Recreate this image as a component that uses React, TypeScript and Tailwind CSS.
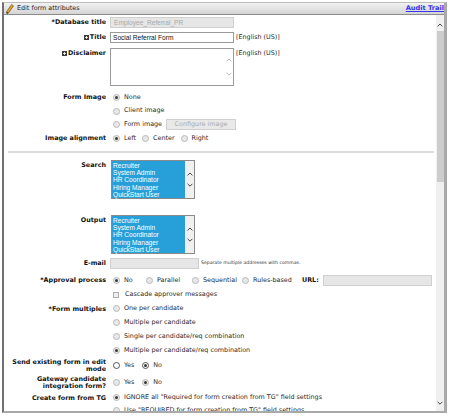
import React from "react";

const roles = ["Recruiter", "System Admin", "HR Coordinator", "Hiring Manager", "QuickStart User"];

function Radio({on, white}: {on?: boolean; white?: boolean}) {
  return (
    <span
      className={
        white
          ? "flex h-[7px] w-[7px] shrink-0 items-center justify-center rounded-full border border-[#555] bg-white"
          : "flex h-[7px] w-[7px] shrink-0 items-center justify-center rounded-full border border-[#b9b9b9] bg-[#e8e8e8]"
      }
    >
      {on && <span className="h-[3px] w-[3px] rounded-full bg-[#3a3a3a]" />}
    </span>
  );
}

function Opt({label, on, white, className = ""}: {label: string; on?: boolean; white?: boolean; className?: string}) {
  return (
    <div className={`flex items-center gap-[4px] ${className}`}>
      <Radio on={on} white={white} />
      <span className="whitespace-nowrap">{label}</span>
    </div>
  );
}

function Chevron({up, color = "#333"}: {up?: boolean; color?: string}) {
  return (
    <svg width="6" height="4" viewBox="0 0 6 4">
      <path d={up ? "M0.6 3.4 L3 1 L5.4 3.4" : "M0.6 0.8 L3 3.2 L5.4 0.8"} fill="none" stroke={color} strokeWidth="0.9" />
    </svg>
  );
}

function Expand() {
  return (
    <svg width="5" height="5" viewBox="0 0 5 5" className="mr-[1px] inline-block">
      <rect x="0" y="0" width="5" height="5" fill="#3b3b3b" />
      <path d="M2.5 1 V4 M1 2.5 H4" stroke="#fff" strokeWidth="0.8" />
    </svg>
  );
}

function Label({children, top}: {children: React.ReactNode; top?: boolean}) {
  return (
    <div className={`w-[102px] shrink-0 text-right font-bold leading-[7px] text-[#111] ${top ? "pt-[2px]" : ""}`}>
      {children}
    </div>
  );
}

function ListBox() {
  return (
    <div className="flex h-[39px] w-[84px] border border-[#8a8a8a] bg-[#f0f0f0]">
      <div className="flex-1 bg-[#27a0d9] pl-[1px] pt-[0.5px] font-['Liberation_Sans',sans-serif] text-[6.6px] leading-[7.4px] text-white">
        {roles.map((r) => (
          <div key={r}>{r}</div>
        ))}
      </div>
      <div className="flex w-[9px] flex-col items-center justify-center gap-[7px]">
        <Chevron up />
        <Chevron />
      </div>
    </div>
  );
}

export default function App() {
  return (
    <div className="h-[416px] w-[450px] bg-white pl-[2px] pt-[2px] font-['DejaVu_Sans',sans-serif] text-[6.4px] text-[#2a2a2a]">
      <div className="flex h-[411px] w-[445px] flex-col border-b-2 border-l-2 border-r-[3px] border-t border-b-[#a9a9a9] border-l-[#707070] border-r-[#a9a9a9] border-t-[#bdbdbd]">
        <div className="flex h-[12px] shrink-0 items-center overflow-hidden border-b border-[#8c8c8c] bg-gradient-to-b from-[#f2f2f2] to-[#d4d4d4] pl-[2px]">
          <svg width="8" height="10" viewBox="0 0 8 10">
            <path d="M5.6 0.5 L7.5 1.9 L2.5 8.9 L0.8 9.6 L0.6 7.7 Z" fill="#e2a62a" stroke="#5a3a10" strokeWidth="0.6" />
            <path d="M0.6 7.7 L2.5 8.9 L0.8 9.6 Z" fill="#2b2b2b" />
          </svg>
          <span className="ml-[3px] text-[#1e1e1e]">Edit form attributes</span>
          <span className="ml-auto text-[6.6px] font-bold text-[#3535f0] underline">Audit Trail</span>
        </div>

        <div className="flex min-h-0 flex-1">
          <div className="flex min-w-0 flex-1 flex-col overflow-hidden">
            <div className="mt-[2px] flex h-[11px] shrink-0 items-center">
              <Label>*Database title</Label>
              <div className="ml-[4px] flex h-[11px] w-[124px] items-center border border-[#d0d0d0] bg-[#e6e6e6] pl-[3px] font-['Liberation_Sans',sans-serif] text-[6.6px] text-[#a8a8a8]">
                Employee_Referral_PR
              </div>
            </div>

            <div className="mt-[4px] flex h-[11px] shrink-0 items-center">
              <Label>
                <Expand />
                Title
              </Label>
              <div className="ml-[4px] flex h-[11px] w-[124px] items-center border border-[#9a9a9a] bg-white pl-[2px] font-['Liberation_Sans',sans-serif] text-[6.6px] text-[#111]">
                Social Referral Form
              </div>
              <span className="ml-[2px]">[English (US)]</span>
            </div>

            <div className="mt-[5px] flex h-[38px] shrink-0 items-start">
              <Label top>
                <Expand />
                Disclaimer
              </Label>
              <div className="ml-[4px] flex h-[38px] w-[124px] justify-end border border-[#9a9a9a] bg-white">
                <div className="flex w-[8px] flex-col items-center justify-center gap-[10px]">
                  <Chevron up color="#b0b0b0" />
                  <Chevron color="#b0b0b0" />
                </div>
              </div>
              <span className="ml-[2px] pt-[2px] leading-[7px]">[English (US)]</span>
            </div>

            <div className="mt-[5px] flex h-[13.5px] shrink-0 items-center">
              <Label>Form Image</Label>
              <Opt label="None" on className="ml-[7px]" />
            </div>
            <div className="flex h-[13.5px] shrink-0 items-center">
              <div className="w-[102px] shrink-0" />
              <Opt label="Client image" className="ml-[7px]" />
            </div>
            <div className="flex h-[13.5px] shrink-0 items-center">
              <div className="w-[102px] shrink-0" />
              <Opt label="Form image" className="ml-[7px]" />
              <div className="ml-[4px] flex h-[11px] w-[70px] items-center justify-center border border-[#cfcfcf] bg-[#e9e9e9] text-[#a9a9a9]">
                Configure image
              </div>
            </div>
            <div className="flex h-[14px] shrink-0 items-center">
              <Label>Image alignment</Label>
              <Opt label="Left" on className="ml-[7px]" />
              <Opt label="Center" className="ml-[6px]" />
              <Opt label="Right" className="ml-[6px]" />
            </div>

            <div className="ml-[4px] mr-[2px] mt-[5.5px] h-[2px] shrink-0 bg-[#dcdcdc]" />

            <div className="mt-[7px] flex shrink-0 items-start">
              <Label top>Search</Label>
              <div className="ml-[5px]">
                <ListBox />
              </div>
            </div>

            <div className="mt-[16px] flex shrink-0 items-start">
              <Label top>Output</Label>
              <div className="ml-[5px]">
                <ListBox />
              </div>
            </div>

            <div className="mt-[4px] flex h-[10.5px] shrink-0 items-center">
              <Label>E-mail</Label>
              <div className="ml-[4px] h-[10.5px] w-[89px] border border-[#d0d0d0] bg-[#e6e6e6]" />
              <span className="ml-[2px] whitespace-nowrap text-[4.6px] text-[#333]">Separate multiple addresses with commas.</span>
            </div>

            <div className="mt-[6.5px] flex h-[11px] shrink-0 items-center">
              <Label>*Approval process</Label>
              <Opt label="No" on className="ml-[7px] w-[33px]" />
              <Opt label="Parallel" className="w-[46px]" />
              <Opt label="Sequential" className="w-[50px]" />
              <Opt label="Rules-based" className="w-[60px]" />
              <span className="font-bold text-[#111]">URL:</span>
              <div className="ml-[4px] h-[11px] w-[109px] border border-[#d0d0d0] bg-[#e6e6e6]" />
            </div>

            <div className="mt-[2px] flex h-[14px] shrink-0 items-center">
              <div className="w-[102px] shrink-0" />
              <div className="ml-[7px] flex items-center gap-[6px]">
                <span className="h-[6px] w-[6px] border border-[#adadad] bg-[#efefef]" />
                <span>Cascade approver messages</span>
              </div>
            </div>

            <div className="flex h-[14px] shrink-0 items-center">
              <Label>*Form multiples</Label>
              <Opt label="One per candidate" className="ml-[7px]" />
            </div>
            <div className="flex h-[14px] shrink-0 items-center">
              <div className="w-[102px] shrink-0" />
              <Opt label="Multiple per candidate" className="ml-[7px]" />
            </div>
            <div className="flex h-[14px] shrink-0 items-center">
              <div className="w-[102px] shrink-0" />
              <Opt label="Single per candidate/req combination" className="ml-[7px]" />
            </div>
            <div className="flex h-[14px] shrink-0 items-center">
              <div className="w-[102px] shrink-0" />
              <Opt label="Multiple per candidate/req combination" on className="ml-[7px]" />
            </div>

            <div className="flex h-[16px] shrink-0 items-center">
              <Label>Send existing form in edit mode</Label>
              <Opt label="Yes" white className="ml-[7px]" />
              <Opt label="No" on white className="ml-[8px]" />
            </div>

            <div className="flex h-[17px] shrink-0 items-center">
              <Label>Gateway candidate integration form?</Label>
              <Opt label="Yes" className="ml-[7px]" />
              <Opt label="No" on className="ml-[8px]" />
            </div>

            <div className="flex h-[14px] shrink-0 items-center">
              <Label>Create form from TG</Label>
              <Opt label={'IGNORE all "Required for form creation from TG" field settings'} on className="ml-[7px]" />
            </div>
            <div className="flex h-[12px] shrink-0 items-center">
              <div className="w-[102px] shrink-0" />
              <Opt label={'Use "REQUIRED for form creation from TG" field settings'} className="ml-[7px]" />
            </div>
          </div>

          <div className="flex w-[8px] shrink-0 flex-col items-center bg-[#f0f0f0]">
            <div className="mt-[8px]">
              <Chevron up />
            </div>
            <div className="mt-[4px] h-[151px] w-[7px] bg-[#cdcdcd]" />
            <div className="mt-auto mb-[6px]">
              <Chevron />
            </div>
          </div>
        </div>
      </div>
    </div>
  );
}
